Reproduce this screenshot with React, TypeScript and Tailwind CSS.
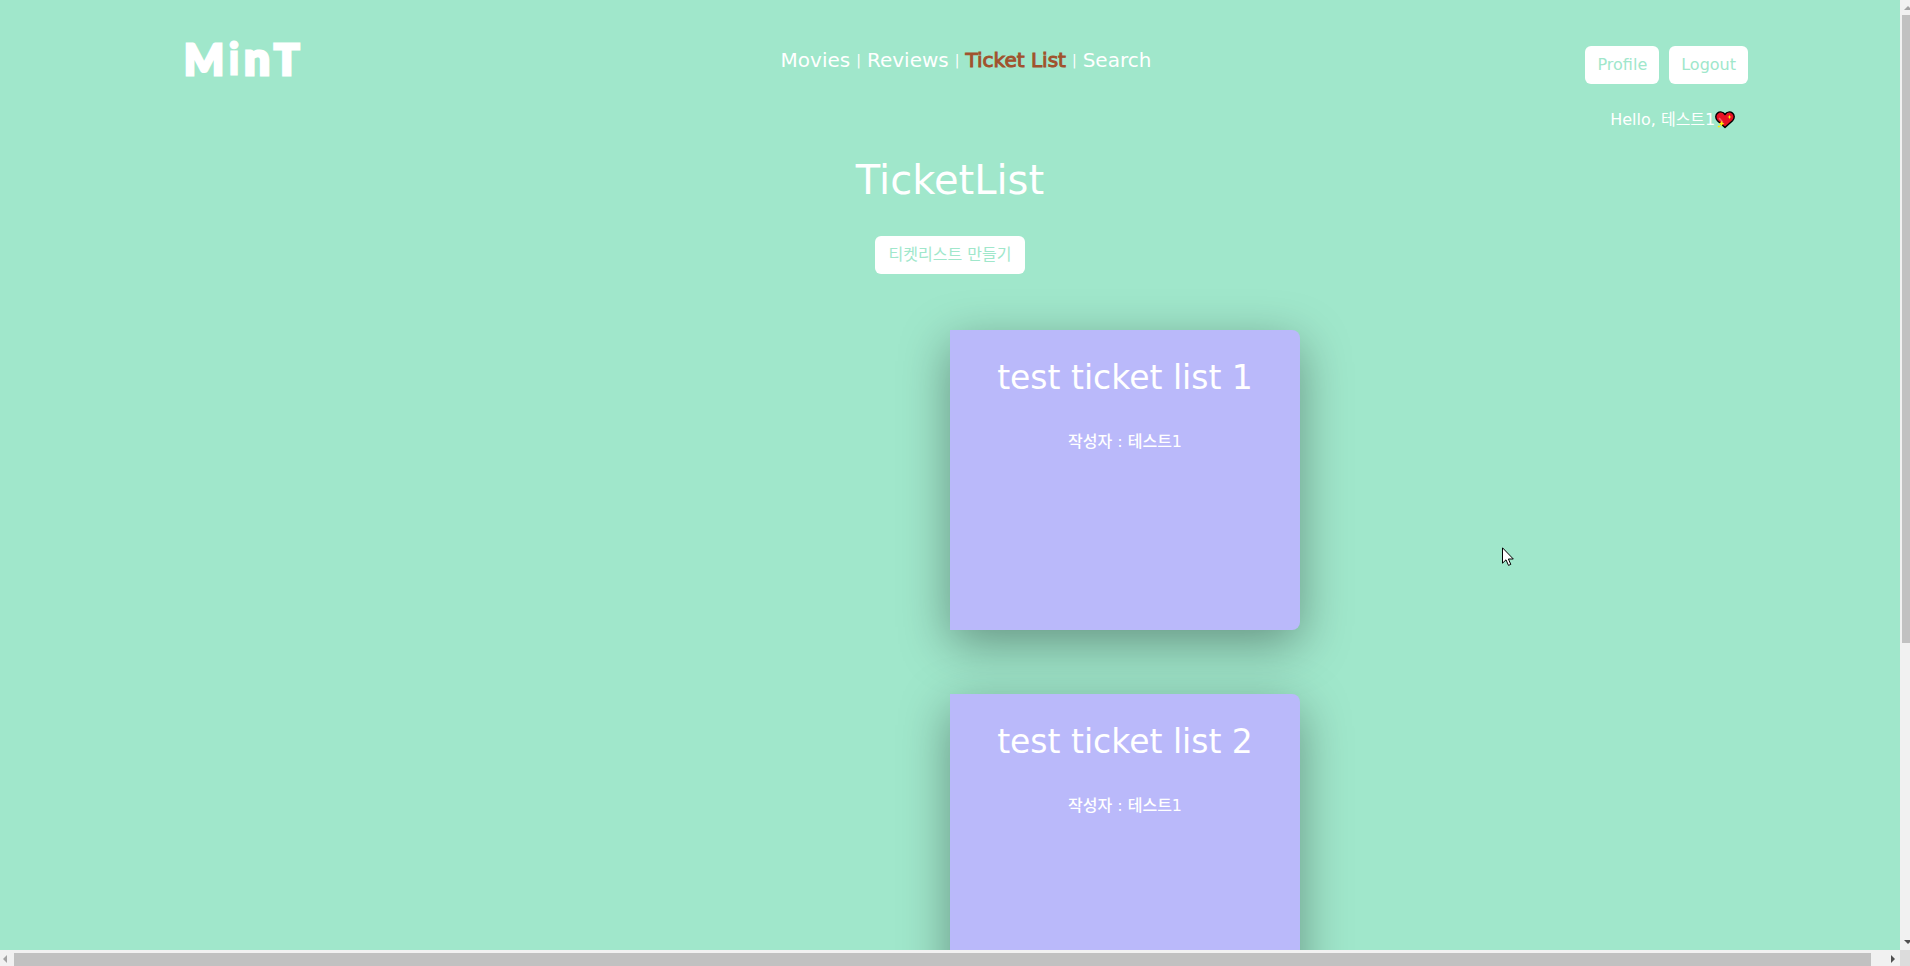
const navItems = ["Movies", "Reviews", "Ticket List", "Search"];
const ticketLists = [
  { id: 1, title: "test ticket list 1", author: "테스트1" },
  { id: 2, title: "test ticket list 2", author: "테스트1" },
];

function Logo() {
  return (
    <a
      href="#home"
      aria-label="MinT"
      className="flex items-baseline gap-1 pl-8 font-['Lato',sans-serif] text-[42px] leading-[56px] font-black text-white [-webkit-text-stroke:3px_white]"
    >
      <span>M</span>
      <span className="flex gap-1 text-[46px]">
        <span className="[-webkit-text-stroke:1px_white]">i</span>
        <span>n</span>
      </span>
      <span>T</span>
    </a>
  );
}

function SparklingHeart() {
  return (
    <svg viewBox="0 0 20 18" className="h-[18px] w-5" aria-hidden="true">
      <path
        d="M10 16.6 2.2 9.4C.2 7.200.4 3.800 2.500 2.100 4.800.4 8 .8 10 3.500 12 .8 15.200.4 17.500 2.100c2.100 1.700 2.300 5.100.3 7.300Z"
        fill="#e81224"
        stroke="#000"
        strokeWidth="1.400"
        strokeLinejoin="round"
      />
      <path d="M4.500 7.500 7.500 11" stroke="#f4606c" strokeWidth="1.600" fill="none" strokeLinecap="round" />
      <path d="m14.500 3.800.6 1.600 1.600.6-1.600.6-.6 1.600-.6-1.600-1.600-.6 1.600-.6Z" fill="#fff100" />
      <path d="m6.500 9.700.9 2.100 2.100.9-2.100.9-.9 2.100-.9-2.100-2.100-.9 2.100-.9Z" fill="#fff100" />
      <path d="m4 13.800.5 1.200 1.200.5-1.200.5-.5 1.200-.5-1.200-1.200-.5 1.200-.5Z" fill="#fff100" />
    </svg>
  );
}

function Header() {
  return (
    <header className="mx-[8%] grid grid-cols-[1fr_auto_1fr] pt-[30px]">
      <Logo />
      <nav className="flex items-center gap-[6px] self-start pt-4 pl-8 text-[20px] leading-7">
        {navItems.map((item, index) => (
          <span key={item} className="flex items-center gap-[6px]">
            {index > 0 && <span className="text-sm">|</span>}
            <a
              href="#nav"
              className={item === "Ticket List" ? "text-[#a0522d] [-webkit-text-stroke:1px_#a0522d]" : ""}
            >
              {item}
            </a>
          </span>
        ))}
      </nav>
      <div className="flex flex-col items-center justify-self-end pt-4">
        <div className="flex gap-[10px]">
          <button className="h-[38px] rounded-md bg-white px-3 text-[#a0e7cb]">Profile</button>
          <button className="h-[38px] rounded-md bg-white px-3 text-[#a0e7cb]">Logout</button>
        </div>
        <p className="flex items-center pt-6 pl-3 text-[16px] leading-6">
          Hello, 테스트1
          <SparklingHeart />
        </p>
      </div>
    </header>
  );
}

function TicketCard({ title, author }: { title: string; author: string }) {
  return (
    <article className="h-[300px] w-[350px] rounded-r-lg bg-[#bab9fa] pt-6 text-center shadow-[0_14px_50px_rgba(0,0,0,0.36)]">
      <h2 className="text-[33px] leading-[48px]">{title}</h2>
      <p className="pt-7 text-[16px] leading-6 font-medium">작성자 : {author}</p>
    </article>
  );
}

function Pointer() {
  return (
    <svg viewBox="0 0 12 19" className="absolute top-[547px] left-[1502px] h-[19px] w-3" aria-hidden="true">
      <path d="M.5.8v15.400l3.500-3.400 2.500 5.600 2.300-1-2.400-5.400h4.900Z" fill="#fff" stroke="#000" />
    </svg>
  );
}

function Arrow({ d, dark }: { d: string; dark?: boolean }) {
  return (
    <svg viewBox="0 0 8 8" className="size-2 shrink-0" aria-hidden="true">
      <path d={d} fill={dark ? "#505050" : "#a3a3a3"} />
    </svg>
  );
}

export default function App() {
  return (
    <div className="grid h-screen grid-cols-[1fr_10px] grid-rows-[1fr_16px] overflow-hidden bg-[#f1f1f1] font-['DejaVu_Sans','Noto_Sans_CJK_KR',sans-serif] text-white">
      <div className="relative overflow-hidden bg-[#a0e7cb]">
        <Header />
        <main>
          <div className="flex flex-col items-center pt-[18px]">
            <h1 className="text-[40px] leading-[60px]">TicketList</h1>
            <button className="mt-[26px] h-[38px] rounded-md bg-white px-[14px] text-[16px] text-[#a0e7cb]">
              티켓리스트 만들기
            </button>
          </div>
          <div className="ml-[50%] flex flex-col gap-16 pt-14">
            {ticketLists.map((list) => (
              <TicketCard key={list.id} title={list.title} author={list.author} />
            ))}
          </div>
        </main>
        <Pointer />
      </div>
      <div className="flex flex-col overflow-hidden pl-[2px]" aria-hidden="true">
        <div className="flex h-[15px] items-center pl-[2px]">
          <Arrow d="M0 6 4 2l4 4Z" />
        </div>
        <div className="h-[628px] bg-[#c1c1c1]" />
        <div className="mt-auto flex h-[17px] items-center pl-[2px]">
          <Arrow dark d="M0 2h8L4 6Z" />
        </div>
      </div>
      <div className="flex items-center pt-[2px]" aria-hidden="true">
        <div className="flex w-[14px] pl-[2px]">
          <Arrow d="M5 0v8L1 4Z" />
        </div>
        <div className="h-[13px] flex-1 bg-[#c1c1c1]" />
        <div className="flex w-[29px] justify-end pr-[2px]">
          <Arrow dark d="M1 0v8l4-4Z" />
        </div>
      </div>
      <div className="bg-[#dcdcdc]" />
    </div>
  );
}
